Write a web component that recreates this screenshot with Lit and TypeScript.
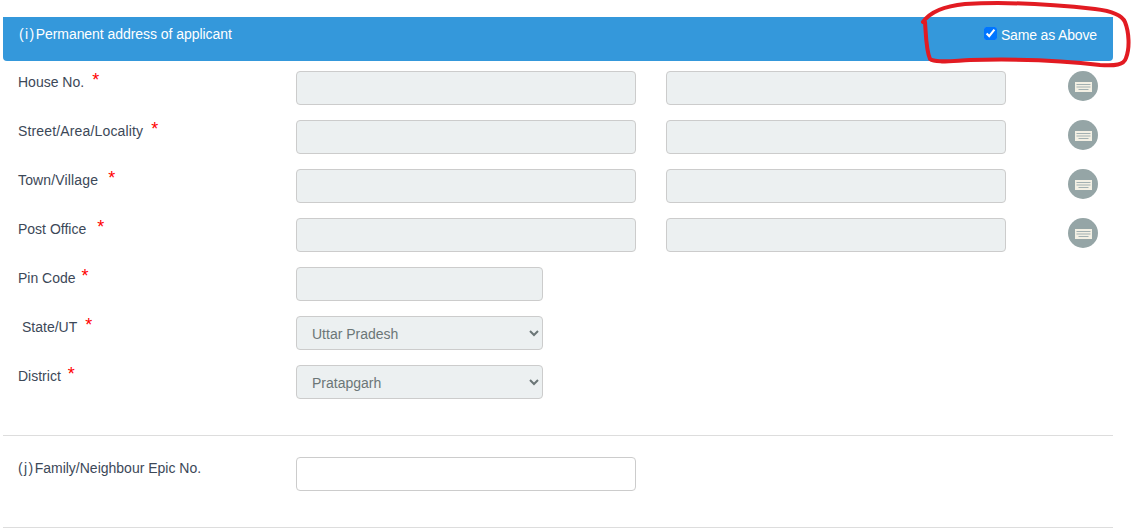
import { LitElement, html, css, svg } from "lit";
import { customElement } from "lit/decorators.js";

const keyboard = svg`<svg class="kb" viewBox="0 0 17 10" width="17" height="10" aria-hidden="true">
  <rect x="0" y="0" width="17" height="10" fill="#f3f0e4"/>
  <path d="M1.5 2.5h14M1.5 5h14M3.5 7.5h10" stroke="#a3b1b2" stroke-width="1" fill="none"/>
</svg>`;

@customElement("app-root")
export class AppRoot extends LitElement {
  static styles = css`
    :host {
      display: block;
      position: relative;
      width: 1133px;
      height: 530px;
      overflow: hidden;
      background: #fff;
      font-family: "Liberation Sans", Arial, sans-serif;
      font-size: 14px;
      color: #3c4858;
    }
    .wrap {
      width: 1110px;
      margin-left: 3px;
      padding-top: 17px;
    }
    .head {
      display: flex;
      justify-content: space-between;
      height: 44px;
      box-sizing: border-box;
      background: #3498db;
      border-radius: 0 0 4px 4px;
      color: #fff;
      padding: 9px 16px 0 16px;
      line-height: 16px;
    }
    .tag { letter-spacing: 1.4px; }
    .title { letter-spacing: -0.05px; }
    .same {
      display: flex;
      align-items: flex-start;
      gap: 4px;
      padding-top: 1px;
      letter-spacing: -0.15px;
    }
    .same input {
      width: 13px;
      height: 13px;
      margin: 0;
      accent-color: #0075ff;
    }
    .rows {
      display: grid;
      grid-template-columns: 293px 340px 340px;
      margin-top: 10px;
      row-gap: 15px;
    }
    .label {
      padding: 3px 0 0 15px;
      line-height: 16px;
      white-space: nowrap;
    }
    .label.ind { padding-left: 19px; }
    .req {
      color: #f00;
      font-size: 18px;
      line-height: 0;
      position: relative;
      top: -1px;
      letter-spacing: 0;
    }
    .cells {
      display: flex;
      grid-column: 2 / 4;
      gap: 30px;
      align-items: flex-start;
      width: 802px;
    }
    .field, .sel {
      display: block;
      box-sizing: border-box;
      height: 34px;
      background: #ecf0f1;
      border: 1px solid #ccc;
      border-radius: 4px;
      margin: 0;
      font: inherit;
    }
    .field { padding: 0 15px; }
    .sel {
      padding: 2px 12px 0 11px;
      color: #6b7677;
    }
    .w340 { width: 340px; }
    .w247 { width: 247px; }
    .white { background: #fff; }
    .btn {
      width: 30px;
      height: 30px;
      border: 0;
      border-radius: 50%;
      padding: 1px 0 0;
      margin-left: 32px;
      background: #95a5a6;
      display: flex;
      align-items: center;
      justify-content: center;
    }
    hr {
      border: 0;
      border-top: 1px solid #ddd;
      margin: 0;
    }
    .h1 { margin-top: 36px; }
    .fam {
      display: grid;
      grid-template-columns: 293px 340px;
      margin-top: 21px;
    }
    .fam .label { padding-top: 3px; }
    .h2 { margin-top: 36px; }
    .ink {
      position: absolute;
      left: 0;
      top: 0;
      pointer-events: none;
    }
  `;

  row(label: string, gap: number, ind = false, spacing = 0) {
    return html`<div class="label ${ind ? "ind" : ""}" style="letter-spacing:${spacing}px">${label}<span class="req" style="margin-left:${gap}px">*</span></div>`;
  }

  double(label: string, gap: number, spacing = 0) {
    return html`${this.row(label, gap, false, spacing)}
      <div class="cells">
        <input class="field w340" disabled />
        <input class="field w340" disabled />
        <button class="btn" aria-label="Keyboard">${keyboard}</button>
      </div>`;
  }

  render() {
    return html`<div class="wrap">
        <div class="head">
          <span><span class="tag">(i)</span><span class="title">Permanent address of applicant</span></span>
          <label class="same"><input type="checkbox" checked />Same as Above</label>
        </div>
        <div class="rows">
          ${this.double("House No.", 8)}
          ${this.double("Street/Area/Locality", 8, 0.15)}
          ${this.double("Town/Village", 10, 0.15)}
          ${this.double("Post Office", 11)}
          ${this.row("Pin Code", 6)}
          <div class="cells"><input class="field w247" disabled /></div>
          ${this.row("State/UT", 8, true)}
          <div class="cells"><select class="sel w247"><option>Uttar Pradesh</option></select></div>
          ${this.row("District", 7)}
          <div class="cells"><select class="sel w247"><option>Pratapgarh</option></select></div>
        </div>
        <hr class="h1" />
        <div class="fam">
          <div class="label"><span class="tag">(j)</span>Family/Neighbour Epic No.</div>
          <input class="field white w340" />
        </div>
        <hr class="h2" />
      </div>
      <svg class="ink" width="1133" height="70" viewBox="0 0 1133 70" fill="none" aria-hidden="true">
        <path d="M923 22C930 12 945 6 965 4C1000 2 1050 4 1095 9C1112 11 1122 15 1125 22C1129 32 1130 48 1126 58C1124 65 1115 66 1100 65C1060 60 1010 59 970 60C950 61 935 63 930 59C926 50 926 35 925 22" stroke="#e21b22" stroke-width="4" stroke-linecap="round"/>
      </svg>`;
  }
}
